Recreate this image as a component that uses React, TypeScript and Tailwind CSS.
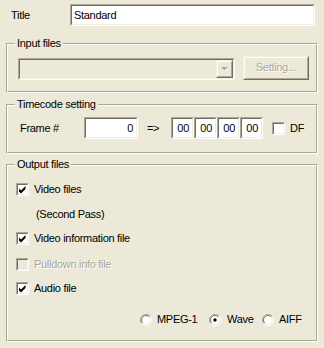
import type { ReactNode } from 'react';

const BG = 'bg-[#ece9d8]';

// classic 3D sunken edge (text fields, check boxes)
function Sunken({ className = '', fill = 'bg-white', children }: { className?: string; fill?: string; children?: ReactNode }) {
  return (
    <div className={`border border-t-[#aca899] border-l-[#aca899] border-b-white border-r-white ${className}`}>
      <div className={`h-full w-full border border-t-[#716f64] border-l-[#716f64] border-b-[#f1efe2] border-r-[#f1efe2] ${fill}`}>
        {children}
      </div>
    </div>
  );
}

function Raised({ className = '', children }: { className?: string; children?: ReactNode }) {
  return (
    <div className={`border border-t-[#f1efe2] border-l-[#f1efe2] border-b-[#716f64] border-r-[#716f64] ${className}`}>
      <div className={`h-full w-full border border-t-white border-l-white border-b-[#aca899] border-r-[#aca899] ${BG}`}>
        {children}
      </div>
    </div>
  );
}

function Group({ title, className = '', children }: { title: string; className?: string; children?: ReactNode }) {
  return (
    <div className={`relative mx-[6px] border border-t-[#aca899] border-l-[#aca899] border-b-white border-r-white ${className}`}>
      <div className="h-full border border-t-white border-l-white border-b-[#aca899] border-r-[#aca899]">
        {children}
      </div>
      <span className={`absolute -top-[8px] left-[8px] px-[2px] leading-[14px] ${BG}`}>{title}</span>
    </div>
  );
}

function CheckBox({ checked, disabled }: { checked?: boolean; disabled?: boolean }) {
  return (
    <Sunken className="h-[13px] w-[13px] shrink-0" fill={disabled ? BG : 'bg-white'}>
      {checked && (
        <svg width="9" height="9" viewBox="0 0 9 9" className="block">
          <path d="M1 3.5 L3 5.5 L7.5 1 V4 L3 8.5 L1 6.5 Z" fill="#000" />
        </svg>
      )}
    </Sunken>
  );
}

function Radio({ checked }: { checked?: boolean }) {
  return (
    <svg width="12" height="12" viewBox="0 0 12 12" className="block shrink-0">
      <path d="M10.5 2.5 A5.5 5.5 0 0 0 1.5 9.5" fill="none" stroke="#aca899" strokeWidth="1" />
      <path d="M1.5 9.5 A5.5 5.5 0 0 0 10.5 2.5" fill="none" stroke="#ffffff" strokeWidth="1" />
      <circle cx="6" cy="6" r="4.5" fill="#fff" />
      <path d="M9.2 2.8 A4.5 4.5 0 0 0 2.8 9.2" fill="none" stroke="#716f64" strokeWidth="1" />
      <path d="M2.8 9.2 A4.5 4.5 0 0 0 9.2 2.8" fill="none" stroke="#f1efe2" strokeWidth="1" />
      {checked && <circle cx="6" cy="6" r="1.7" fill="#000" />}
    </svg>
  );
}

function TcBox() {
  return (
    <Sunken className="h-[22px] w-[23px]">
      <div className="pr-[3px] text-right leading-[18px]">00</div>
    </Sunken>
  );
}

export default function App() {
  return (
    <div
      className={`h-[348px] w-[324px] overflow-hidden text-[11px] tracking-[-0.3px] text-black ${BG}`}
      style={{ fontFamily: '"Liberation Sans", Arial, sans-serif' }}
    >
      {/* title */}
      <div className="mt-[4px] flex h-[22px] items-center">
        <span className="ml-[11px] w-[59px]">Title</span>
        <Sunken className="h-[22px] w-[245px]">
          <div className="pl-[2px] leading-[18px]">Standard</div>
        </Sunken>
      </div>

      <Group title="Input files" className="mt-[17px] h-[50px]">
        <div className="flex items-start pl-[10px] pt-[13px]">
          <Sunken className="h-[22px] w-[217px]" fill={BG}>
            <div className="flex h-full justify-end">
              <Raised className="h-[18px] w-[17px]">
                <div className="flex h-full items-center justify-center">
                  <svg width="8" height="5" viewBox="0 0 8 5" className="block">
                    <path d="M1 1 H8 L4.5 4.5 Z" fill="#ffffff" />
                    <path d="M0 0 H7 L3.5 3.5 Z" fill="#aca899" />
                  </svg>
                </div>
              </Raised>
            </div>
          </Sunken>
          <Raised className="-mt-[2px] ml-[8px] h-[24px] w-[66px]">
            <div className="text-center leading-[19px] text-[#aca899] [text-shadow:1px_1px_0_#fff]">Setting...</div>
          </Raised>
        </div>
      </Group>

      <Group title="Timecode setting" className="mt-[11px] h-[50px]">
        <div className="flex items-center pt-[11px]">
          <span className="ml-[12px] w-[64px]">Frame #</span>
          <Sunken className="h-[22px] w-[54px]">
            <div className="pr-[3px] text-right leading-[18px]">0</div>
          </Sunken>
          <span className="ml-[9px] w-[24px]">=&gt;</span>
          <div className="flex">
            <TcBox />
            <TcBox />
            <TcBox />
            <TcBox />
          </div>
          <div className="ml-[9px]">
            <CheckBox />
          </div>
          <span className="ml-[5px]">DF</span>
        </div>
      </Group>

      <Group title="Output files" className="mt-[10px] h-[178px]">
        <div className="pl-[8px] pt-[17px]">
          <div className="flex h-[13px] items-center">
            <CheckBox checked />
            <span className="ml-[5px]">Video files</span>
          </div>
          <div className="ml-[20px] mt-[11px] leading-[14px]">(Second Pass)</div>
          <div className="mt-[11px] flex h-[13px] items-center">
            <CheckBox checked />
            <span className="ml-[5px]">Video information file</span>
          </div>
          <div className="mt-[13px] flex h-[13px] items-center">
            <CheckBox disabled />
            <span className="ml-[5px] text-[#aca899] [text-shadow:1px_1px_0_#fff]">Pulldown info file</span>
          </div>
          <div className="mt-[11px] flex h-[13px] items-center">
            <CheckBox checked />
            <span className="ml-[5px]">Audio file</span>
          </div>
          <div className="ml-[124px] mt-[18px] flex h-[13px] items-center">
            <Radio />
            <span className="ml-[5px] w-[52px]">MPEG-1</span>
            <Radio checked />
            <span className="ml-[6px] w-[35px]">Wave</span>
            <Radio />
            <span className="ml-[5px]">AIFF</span>
          </div>
        </div>
      </Group>
    </div>
  );
}
